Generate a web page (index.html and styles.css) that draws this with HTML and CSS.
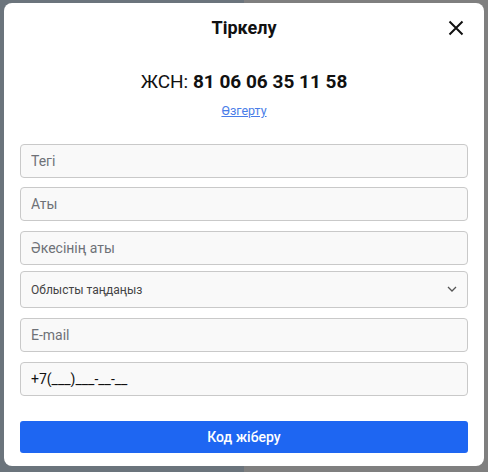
FILE: index.html
```html
<!DOCTYPE html>
<html>
<head>
    <title>Тіркелу</title>
    <link rel="stylesheet" href="styles.css">
</head>
<body>
    <div class="modal">
        <div class="modal-header">
            <h2 class="modal-title">Тіркелу</h2>
            <button class="close-btn" type="button" aria-label="Жабу">
                <svg width="16" height="16" viewBox="0 0 16 16">
                    <path d="M1.5 1.5 L14.5 14.5 M14.5 1.5 L1.5 14.5" stroke="#111" stroke-width="2" fill="none"/>
                </svg>
            </button>
        </div>
        <div class="iin">ЖСН: <b>81 06 06 35 11 58</b></div>
        <div class="change"><a href="#">Өзгерту</a></div>
        <form class="reg-form">
            <input class="field" type="text" placeholder="Тегі">
            <input class="field" type="text" placeholder="Аты">
            <input class="field patronymic" type="text" placeholder="Әкесінің аты">
            <div class="select-wrap">
                <select class="field select">
                    <option>Облысты таңдаңыз</option>
                </select>
                <svg class="chevron" width="10" height="6" viewBox="0 0 10 6">
                    <path d="M1 1 L5 5 L9 1" stroke="#555" stroke-width="1.3" fill="none"/>
                </svg>
            </div>
            <input class="field" type="email" placeholder="E-mail">
            <input class="field phone" type="text" value="+7(___)___-__-__">
            <button class="submit-btn" type="submit">Код жіберу</button>
        </form>
    </div>
</body>
</html>
```

FILE: styles.css
```css
html, body {
    margin: 0;
    padding: 0;
}
body {
    font-family: Roboto, "Liberation Sans", Arial, sans-serif;
    width: 488px;
    height: 472px;
    overflow: hidden;
    background: linear-gradient(to right, #6b747c 50%, #7f7f7f 50%);
    padding-top: 3px;
    box-sizing: border-box;
}
.modal {
    margin: 0 4px;
    width: 480px;
    height: 463px;
    box-sizing: border-box;
    background: #fff;
    border-radius: 8px;
    padding: 15px 16px 0;
}
.modal-header {
    position: relative;
    height: 20px;
    display: flex;
    justify-content: center;
    align-items: center;
}
.modal-title {
    margin: 0;
    font-size: 18px;
    font-weight: 700;
    color: #111;
    line-height: 20px;
}
.close-btn {
    position: absolute;
    right: 4px;
    top: 2px;
    width: 16px;
    height: 16px;
    padding: 0;
    border: none;
    background: none;
    display: flex;
}
.iin {
    margin-top: 32px;
    text-align: center;
    font-size: 19px;
    line-height: 24px;
    color: #111;
}
.iin b {
    font-weight: 700;
}
.change {
    margin-top: 10px;
    text-align: center;
    font-size: 12.5px;
    line-height: 14px;
}
.change a {
    color: #4a7de8;
}
.reg-form {
    margin-top: 26px;
    display: flex;
    flex-direction: column;
}
.field {
    box-sizing: border-box;
    width: 448px;
    height: 34px;
    margin: 0 0 9px;
    padding: 0 10px;
    border: 1px solid #c9c9c9;
    border-radius: 4px;
    background: #f9f9f9;
    font-family: Roboto, "Liberation Sans", Arial, sans-serif;
    font-size: 14px;
    color: #222;
    outline: none;
}
.field::placeholder {
    color: #6e7177;
}
.patronymic {
    margin-top: 1px;
}
.select-wrap {
    position: relative;
    margin-top: -3px;
}
.select {
    appearance: none;
    height: 37px;
    font-size: 12px;
    color: #444;
    margin-bottom: 10px;
}
.chevron {
    position: absolute;
    right: 11px;
    top: 15px;
    pointer-events: none;
}
.phone {
    margin-top: 1px;
    color: #111;
}
.submit-btn {
    margin-top: 16px;
    height: 32px;
    width: 448px;
    border: none;
    border-radius: 3px;
    background: #1e66f2;
    color: #fff;
    font-family: Roboto, "Liberation Sans", Arial, sans-serif;
    font-size: 14px;
    font-weight: 500;
}
```
